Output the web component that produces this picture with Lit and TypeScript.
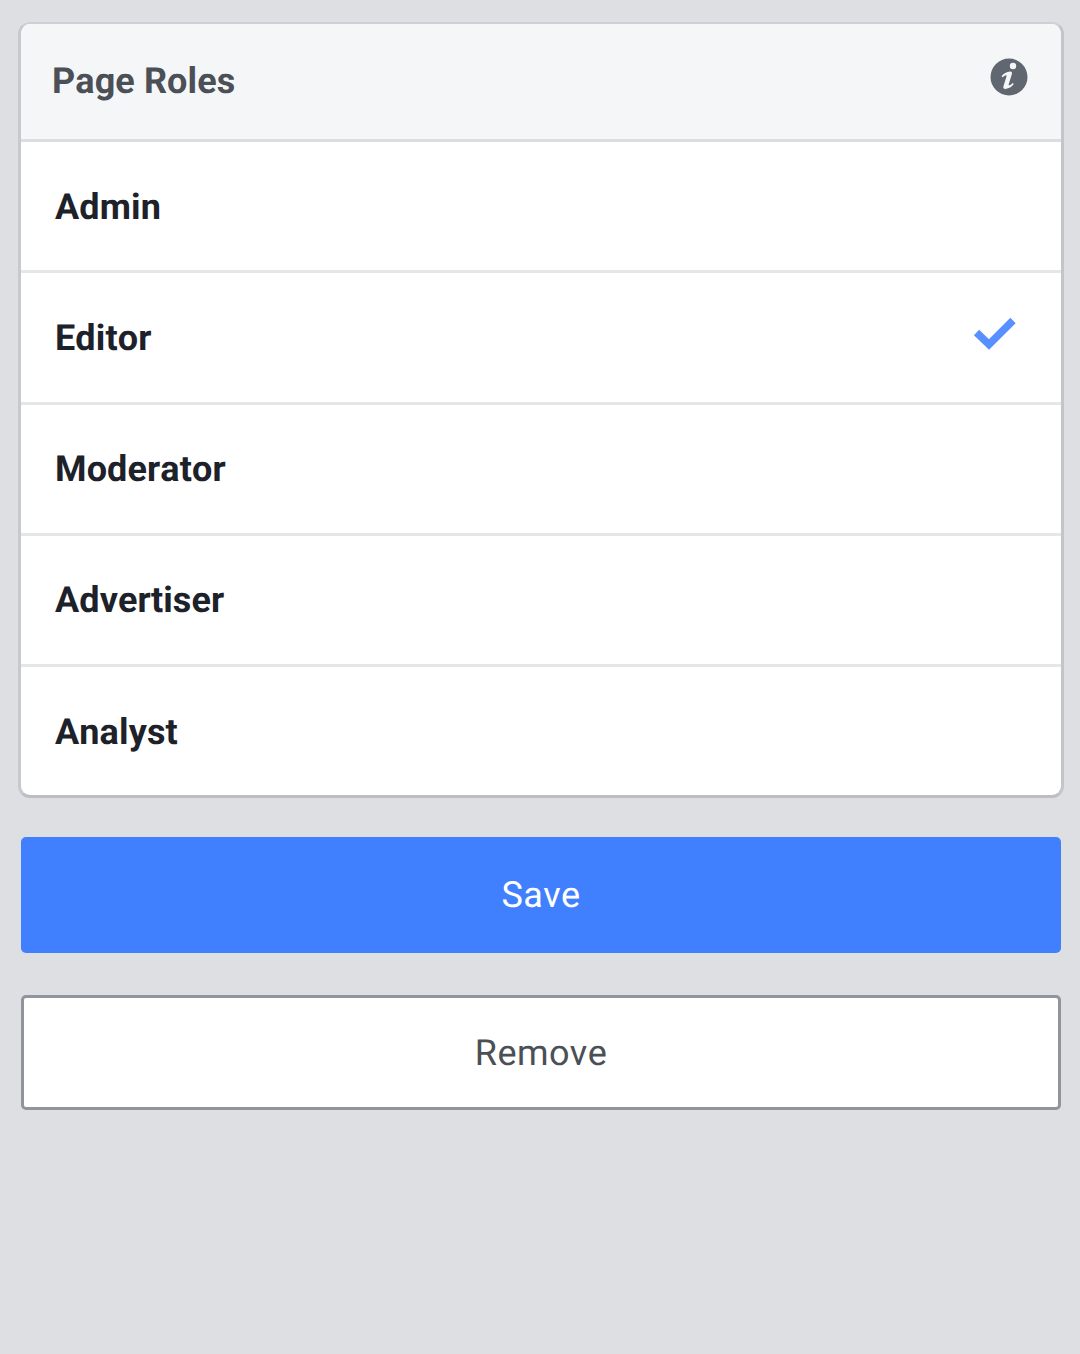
import { LitElement, html, css } from "lit";
import { customElement } from "lit/decorators.js";

const ROLES = ["Admin", "Editor", "Moderator", "Advertiser", "Analyst"];

@customElement("app-root")
export class AppRoot extends LitElement {
  static styles = css`
    :host {
      display: block;
      width: 1080px;
      height: 1354px;
      background: #dddfe3;
      font-family: Roboto, "Liberation Sans", sans-serif;
      font-kerning: none;
      text-rendering: geometricPrecision;
      box-sizing: border-box;
      padding: 22px 16px 0 18px;
    }
    .card {
      border-style: solid;
      border-color: #cfd0d3 #c4c5c8 #bcbec1 #c8c9cc;
      border-width: 2px 3px 3px 3px;
      border-radius: 12px;
      background: #fff;
      overflow: hidden;
      height: 776px;
      box-sizing: border-box;
      display: flex;
      flex-direction: column;
    }
    .head {
      height: 118px;
      flex: none;
      box-sizing: border-box;
      background: #f5f6f8;
      border-bottom: 3px solid #dcdde0;
      display: flex;
      justify-content: space-between;
      padding: 0 33px 0 31px;
    }
    .title {
      font-size: 36px;
      font-weight: 700;
      letter-spacing: 0.1px;
      color: #4b4f56;
      line-height: 42px;
      margin-top: 36px;
    }
    .info {
      width: 38px;
      height: 38px;
      margin-top: 34px;
    }
    .rows {
      flex: 1;
      display: grid;
      grid-template-rows: repeat(4, 131.25px) 1fr;
    }
    .row {
      display: flex;
      align-items: center;
      justify-content: space-between;
      padding: 1px 44px 0 34px;
      border-bottom: 3px solid #e6e6e8;
    }
    .row:last-child { border-bottom: none; }
    .name {
      font-size: 36px;
      font-weight: 700;
      letter-spacing: 0.12px;
      color: #1d2129;
      line-height: 42px;
    }
    .check { width: 44px; height: 36px; margin-top: -9px; }
    .btn {
      box-sizing: border-box;
      margin-left: 3px;
      width: 1040px;
      display: flex;
      align-items: center;
      justify-content: center;
      font-size: 36px;
      letter-spacing: 0.4px;
      border-radius: 5px;
    }
    .save {
      margin-top: 39px;
      height: 116px;
      background: #4080ff;
      color: #fff;
    }
    .remove {
      margin-top: 42px;
      height: 115px;
      background: #fff;
      color: #4b4f56;
      border: 3px solid #90949c;
    }
  `;

  render() {
    return html`
      <div class="card">
        <div class="head">
          <div class="title">Page Roles</div>
          <svg class="info" viewBox="0 0 38 38">
            <circle cx="19" cy="19" r="18.5" fill="#606770" />
            <circle cx="23" cy="8" r="3.2" fill="#f5f6f8" />
            <path
              d="M11.5 18.2c2.4-2.6 4.9-4.2 8.6-4.6 1.6-.1 2.2.9 1.8 2.3l-3.2 10.4c-.3 1 .5 1.3 1.2.9 1-.6 2-1.4 2.9-2.3l1 1.2c-2.2 2.8-5 4.6-8.2 4.8-1.9.1-2.6-1-2.2-2.5l3.1-10.2c.3-1-.4-1.2-1.2-.8-.9.5-1.8 1.2-2.6 1.9z"
              fill="#f5f6f8"
            />
          </svg>
        </div>
        <div class="rows">
          ${ROLES.map(
            (r) => html`
              <div class="row">
                <span class="name">${r}</span>
                ${r === "Editor"
                  ? html`<svg class="check" viewBox="0 0 44 36">
                      <path
                        d="M3.5 17.5L16 29.5L40 5.5"
                        fill="none"
                        stroke="#5890ff"
                        stroke-width="7.5"
                      />
                    </svg>`
                  : ""}
              </div>
            `
          )}
        </div>
      </div>
      <div class="btn save">Save</div>
      <div class="btn remove">Remove</div>
    `;
  }
}
